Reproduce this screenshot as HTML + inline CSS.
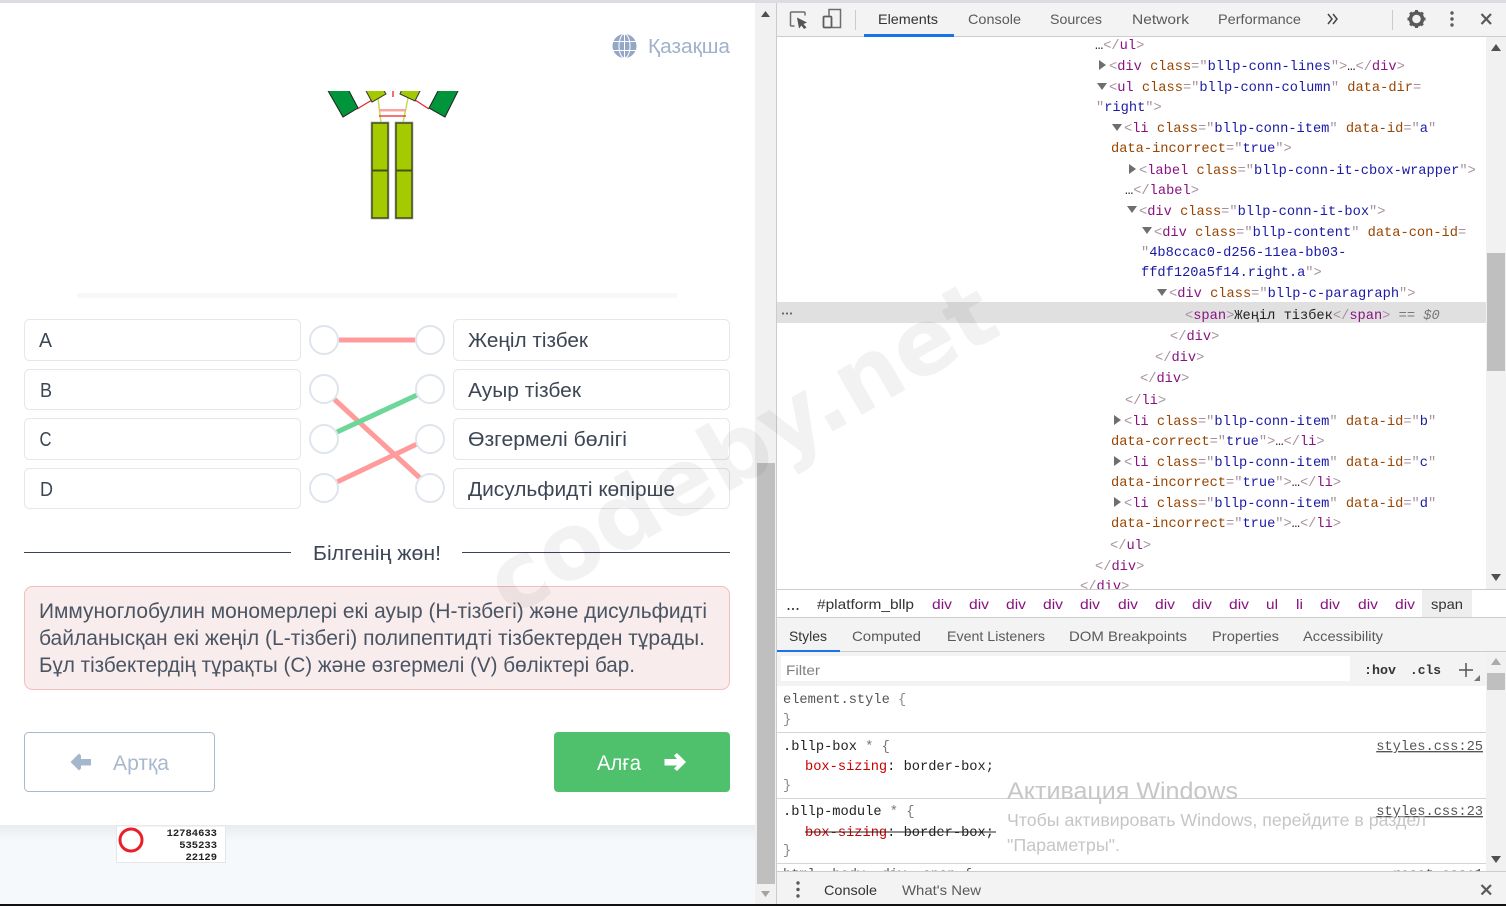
<!DOCTYPE html>
<html><head><meta charset="utf-8"><style>
html,body{margin:0;padding:0;width:1506px;height:906px;overflow:hidden;background:#fff}
svg{display:block}
text{white-space:pre}
.s{font-family:"Liberation Sans","DejaVu Sans",sans-serif}
.m{font-family:"Liberation Mono","DejaVu Sans Mono",monospace;font-size:13.7px}
.l{font-size:20px;fill:#3c4654}
.d{font-size:14px;fill:#333}
.g{font-size:14px;fill:#5a5a5a}
.c{font-size:14px;fill:#881280}
.b{fill:#a8909f}.t{fill:#881280}.a{fill:#994500}.v{fill:#1a1aa6}.k{fill:#222}.r{fill:#c80000}
</style></head><body>
<svg width="1506" height="906" viewBox="0 0 1506 906" xmlns="http://www.w3.org/2000/svg">
<defs>
<linearGradient id="sh" x1="0" y1="0" x2="0" y2="1"><stop offset="0" stop-color="#e9ecee"/><stop offset="1" stop-color="#f5f9fb"/></linearGradient>
<clipPath id="ca"><rect x="300" y="91" width="200" height="140"/></clipPath>
<clipPath id="cb"><rect x="777" y="37" width="709" height="552"/></clipPath>
<clipPath id="cc"><rect x="777" y="686" width="709" height="185"/></clipPath>
</defs>

<!-- left page -->
<rect x="0" y="0" width="756" height="904" fill="#f5f9fb"/>
<rect x="0" y="825" width="756" height="16" fill="url(#sh)"/>
<rect x="0" y="3" width="755" height="822" fill="#fff"/>
<rect x="0" y="0" width="1506" height="3" fill="#dcdce3"/>

<!-- language -->
<g fill="#94a7c6"><circle cx="624.500" cy="46" r="12"/></g>
<g stroke="#fff" stroke-width="1" fill="none"><ellipse cx="624.500" cy="46" rx="5.500" ry="12"/><path d="M624.500 34v24M613 41.500h23M613 50.500h23"/></g>
<text class="s" x="648" y="53" font-size="20" fill="#a0b1cb" textLength="82" lengthAdjust="spacingAndGlyphs">Қазақша</text>

<!-- antibody image -->
<g clip-path="url(#ca)">
<path d="M378 98L381 123M408 98L403 123" stroke="#c4dc50" stroke-width="1.500" fill="none"/>
<path d="M357 109L372 100M429 109L415 100M393 85V97M379 116H406" stroke="#e8252b" stroke-width="1.300" fill="none"/>
<rect x="379" y="109" width="27" height="2.500" fill="#f7a6a0"/>
<path d="M327 89L348 89L358 108L343 117Z" fill="#00953b" stroke="#222" stroke-width="1"/>
<path d="M459 89L439 89L429 108L445 117Z" fill="#00953b" stroke="#222" stroke-width="1"/>
<path d="M365 89L383 89L386 94L372 102Z" fill="#a5c900" stroke="#333" stroke-width="1"/>
<path d="M421 89L402 89L400 94L415 101Z" fill="#a5c900" stroke="#333" stroke-width="1"/>
<g fill="none" stroke="#c4c4c4" stroke-width="3">
<rect x="372" y="123" width="16" height="95"/><rect x="396" y="123" width="16" height="95"/></g>
<g fill="#a5ca00" stroke="#414a22" stroke-width="1.500">
<rect x="372" y="123" width="16" height="95"/><rect x="396" y="123" width="16" height="95"/></g>
<path d="M372 170.500H388M396 170.500H412" stroke="#445310" stroke-width="2"/>
</g>
<rect x="77" y="293" width="600" height="5" fill="#f7f8fa"/>

<!-- connection boxes -->
<g fill="#fff" stroke="#e3e8ee" stroke-width="1">
<rect x="24.500" y="319.500" width="276" height="41" rx="5"/>
<rect x="24.500" y="369.500" width="276" height="40" rx="5"/>
<rect x="24.500" y="418.500" width="276" height="41" rx="5"/>
<rect x="24.500" y="468.500" width="276" height="40" rx="5"/>
<rect x="453.500" y="319.500" width="276" height="41" rx="5"/>
<rect x="453.500" y="369.500" width="276" height="40" rx="5"/>
<rect x="453.500" y="418.500" width="276" height="41" rx="5"/>
<rect x="453.500" y="468.500" width="276" height="40" rx="5"/>
</g>
<g class="s l">
<text class="s l" x="39" y="347" textLength="13" lengthAdjust="spacingAndGlyphs">A</text>
<text class="s l" x="40" y="397" textLength="12" lengthAdjust="spacingAndGlyphs">B</text>
<text class="s l" x="39.500" y="446" textLength="12" lengthAdjust="spacingAndGlyphs">C</text>
<text class="s l" x="40" y="496" textLength="13" lengthAdjust="spacingAndGlyphs">D</text>
<text class="s l" x="468" y="347" textLength="120" lengthAdjust="spacingAndGlyphs">Жеңіл тізбек</text>
<text class="s l" x="468" y="397" textLength="113" lengthAdjust="spacingAndGlyphs">Ауыр тізбек</text>
<text class="s l" x="468" y="446" textLength="159" lengthAdjust="spacingAndGlyphs">Өзгермелі бөлігі</text>
<text class="s l" x="468" y="496" textLength="207" lengthAdjust="spacingAndGlyphs">Дисульфидті көпірше</text>
</g>

<!-- lines -->
<path d="M339 340H415M334 399L420 478M337 482L417 444" stroke="#ff9b9b" stroke-width="5" fill="none"/>
<path d="M337 432L417 395" stroke="#6dd699" stroke-width="5" fill="none"/>
<g fill="#fff" stroke="#dfe5ec" stroke-width="2">
<circle cx="324" cy="340" r="14"/><circle cx="324" cy="389" r="14"/><circle cx="324" cy="439" r="14"/><circle cx="324" cy="488" r="14"/>
<circle cx="430" cy="340" r="14"/><circle cx="430" cy="389" r="14"/><circle cx="430" cy="439" r="14"/><circle cx="430" cy="488" r="14"/>
</g>

<!-- feedback -->
<path d="M24 552.500H291M462 552.500H730" stroke="#3a4554" stroke-width="1"/>
<text class="s l" x="313" y="560" textLength="128" lengthAdjust="spacingAndGlyphs">Білгенің жөн!</text>
<rect x="24.500" y="586.500" width="705" height="103" rx="8" fill="#f9eced" stroke="#f7bcbc"/>
<g class="s" font-size="21" fill="#4a5563">
<text x="39" y="618" textLength="668" lengthAdjust="spacingAndGlyphs">Иммуноглобулин мономерлері екі ауыр (Н-тізбегі) және дисульфидті</text>
<text x="39" y="645" textLength="666" lengthAdjust="spacingAndGlyphs">байланысқан екі жеңіл (L-тізбегі) полипептидті тізбектерден тұрады.</text>
<text x="39" y="672" textLength="596" lengthAdjust="spacingAndGlyphs">Бұл тізбектердің тұрақты (С) және өзгермелі (V) бөліктері бар.</text>
</g>

<!-- buttons -->
<rect x="24.500" y="732.500" width="190" height="59" rx="4" fill="#fff" stroke="#a9b9cc"/>
<path d="M70.500 762L79 753.500L81 755.500V759H91V765.500H81V768.500L79 770.500Z" fill="#a5b7cc"/>
<text class="s" x="113" y="770" font-size="21" fill="#a8b9cd" textLength="56" lengthAdjust="spacingAndGlyphs">Артқа</text>
<rect x="554" y="732" width="176" height="60" rx="4" fill="#4fc16c"/>
<text class="s" x="597" y="770" font-size="21" fill="#fff" textLength="44" lengthAdjust="spacingAndGlyphs">Алға</text>
<path d="M686 762L677 753L674 755.500L677 759H664.500V765.500H677L674 768.500L677 771Z" fill="#fff"/>

<!-- small image -->
<rect x="116.500" y="826" width="109" height="36.500" fill="#fff" stroke="#e6e6e6"/>
<circle cx="131" cy="840" r="11" fill="none" stroke="#e8202a" stroke-width="3"/>
<g font-family="'Liberation Mono',monospace" font-size="10.500" font-weight="700" fill="#222" text-anchor="end">
<text x="217" y="836">12784633</text><text x="217" y="848">535233</text><text x="217" y="860">22129</text>
</g>

<!-- left scrollbar -->
<rect x="755" y="3" width="22" height="901" fill="#f1f1f1"/>
<rect x="757" y="463" width="18" height="421" fill="#bfbfbf"/>
<path d="M765.500 11L770 17H761Z" fill="#505050"/>
<path d="M761 891H770L765.500 897Z" fill="#a3a3a3"/>

<!-- devtools -->
<rect x="777" y="3" width="729" height="901" fill="#fff"/>
<rect x="776" y="3" width="1" height="901" fill="#ccc"/>
<rect x="777" y="3" width="729" height="33" fill="#f3f3f3"/>
<rect x="777" y="36" width="729" height="1" fill="#ccc"/>
<rect x="864" y="34" width="90" height="3" fill="#1a73e8"/>
<!-- toolbar icons -->
<path d="M794.500 26H791.500Q790.500 26 790.500 25V13Q790.500 12 791.500 12H804Q805 12 805 13V15.500" fill="none" stroke="#6e6e6e" stroke-width="1.500"/>
<path d="M797 17.500L807 22.500L803.500 24L806.500 27.500L804 29L801.500 25.500L799 28.500Z" fill="#555"/>
<path d="M832 9.500H840.500V27.500H832" fill="none" stroke="#6e6e6e" stroke-width="1.500"/>
<path d="M829 15.500V9.500H832" fill="none" stroke="#6e6e6e" stroke-width="1.500"/>
<rect x="823.500" y="16.500" width="8" height="11" rx="1" fill="#f3f3f3" stroke="#5e5e5e" stroke-width="1.800"/>
<path d="M855.500 10V30M1392.500 10V30" stroke="#ccc"/>
<text class="s d" x="878" y="24" textLength="60" lengthAdjust="spacingAndGlyphs">Elements</text>
<g class="s g">
<text class="s g" x="968" y="24" textLength="53" lengthAdjust="spacingAndGlyphs">Console</text>
<text class="s g" x="1050" y="24" textLength="52" lengthAdjust="spacingAndGlyphs">Sources</text>
<text class="s g" x="1132" y="24" textLength="57" lengthAdjust="spacingAndGlyphs">Network</text>
<text class="s g" x="1218" y="24" textLength="83" lengthAdjust="spacingAndGlyphs">Performance</text>
</g>
<path d="M1328 14L1332 19L1328 24M1333 14L1337 19L1333 24" fill="none" stroke="#444" stroke-width="1.500"/>
<!-- gear -->
<circle cx="1416.500" cy="19" r="6" fill="none" stroke="#5a5a5a" stroke-width="3.500"/>
<path d="M1416.500 10V28M1407.500 19H1425.500M1410.100 12.600L1422.900 25.400M1422.900 12.600L1410.100 25.400" stroke="#5a5a5a" stroke-width="3" stroke-dasharray="3 12 3"/>
<g fill="#5a5a5a"><circle cx="1452" cy="13" r="1.700"/><circle cx="1452" cy="19" r="1.700"/><circle cx="1452" cy="25" r="1.700"/></g>
<path d="M1481.500 14L1491 24M1491 14L1481.500 24" stroke="#5a5a5a" stroke-width="2.200"/>

<!-- elements tree -->
<rect x="777" y="302" width="709" height="21" fill="#e0e0e0"/>
<g fill="#666"><circle cx="783" cy="313.500" r="1.100"/><circle cx="787" cy="313.500" r="1.100"/><circle cx="791" cy="313.500" r="1.100"/></g>
<g clip-path="url(#cb)">
<g fill="#6e6e6e">
<path d="M1099 60L1106 65L1099 70Z"/>
<path d="M1097 83H1107L1102 90Z"/>
<path d="M1112 124H1122L1117 131Z"/>
<path d="M1129 164L1136 169L1129 174Z"/>
<path d="M1127 206H1137L1132 213Z"/>
<path d="M1142 227H1152L1147 234Z"/>
<path d="M1157 289H1167L1162 296Z"/>
<path d="M1114 415L1121 420L1114 425Z"/>
<path d="M1114 456L1121 461L1114 466Z"/>
<path d="M1114 497L1121 502L1114 507Z"/>
</g>
<g class="m">
<text class="m" x="1095" y="49"><tspan class="k">…</tspan><tspan class="b">&lt;/</tspan><tspan class="t">ul</tspan><tspan class="b">&gt;</tspan></text>
<text class="m" x="1109" y="70"><tspan class="b">&lt;</tspan><tspan class="t">div</tspan> <tspan class="a">class</tspan><tspan class="b">="</tspan><tspan class="v">bllp-conn-lines</tspan><tspan class="b">"&gt;</tspan><tspan class="k">…</tspan><tspan class="b">&lt;/</tspan><tspan class="t">div</tspan><tspan class="b">&gt;</tspan></text>
<text class="m" x="1109" y="91"><tspan class="b">&lt;</tspan><tspan class="t">ul</tspan> <tspan class="a">class</tspan><tspan class="b">="</tspan><tspan class="v">bllp-conn-column</tspan><tspan class="b">"</tspan> <tspan class="a">data-dir</tspan><tspan class="b">=</tspan></text>
<text class="m" x="1096" y="111"><tspan class="b">"</tspan><tspan class="v">right</tspan><tspan class="b">"&gt;</tspan></text>
<text class="m" x="1124" y="132"><tspan class="b">&lt;</tspan><tspan class="t">li</tspan> <tspan class="a">class</tspan><tspan class="b">="</tspan><tspan class="v">bllp-conn-item</tspan><tspan class="b">"</tspan> <tspan class="a">data-id</tspan><tspan class="b">="</tspan><tspan class="v">a</tspan><tspan class="b">"</tspan></text>
<text class="m" x="1111" y="152"><tspan class="a">data-incorrect</tspan><tspan class="b">="</tspan><tspan class="v">true</tspan><tspan class="b">"&gt;</tspan></text>
<text class="m" x="1139" y="174"><tspan class="b">&lt;</tspan><tspan class="t">label</tspan> <tspan class="a">class</tspan><tspan class="b">="</tspan><tspan class="v">bllp-conn-it-cbox-wrapper</tspan><tspan class="b">"&gt;</tspan></text>
<text class="m" x="1125" y="194"><tspan class="k">…</tspan><tspan class="b">&lt;/</tspan><tspan class="t">label</tspan><tspan class="b">&gt;</tspan></text>
<text class="m" x="1139" y="215"><tspan class="b">&lt;</tspan><tspan class="t">div</tspan> <tspan class="a">class</tspan><tspan class="b">="</tspan><tspan class="v">bllp-conn-it-box</tspan><tspan class="b">"&gt;</tspan></text>
<text class="m" x="1154" y="236"><tspan class="b">&lt;</tspan><tspan class="t">div</tspan> <tspan class="a">class</tspan><tspan class="b">="</tspan><tspan class="v">bllp-content</tspan><tspan class="b">"</tspan> <tspan class="a">data-con-id</tspan><tspan class="b">=</tspan></text>
<text class="m" x="1141" y="256"><tspan class="b">"</tspan><tspan class="v">4b8ccac0-d256-11ea-bb03-</tspan></text>
<text class="m" x="1141" y="276"><tspan class="v">ffdf120a5f14.right.a</tspan><tspan class="b">"&gt;</tspan></text>
<text class="m" x="1169" y="297"><tspan class="b">&lt;</tspan><tspan class="t">div</tspan> <tspan class="a">class</tspan><tspan class="b">="</tspan><tspan class="v">bllp-c-paragraph</tspan><tspan class="b">"&gt;</tspan></text>
<text class="m" x="1185" y="319"><tspan class="b">&lt;</tspan><tspan class="t">span</tspan><tspan class="b">&gt;</tspan><tspan class="k">Жеңіл тізбек</tspan><tspan class="b">&lt;/</tspan><tspan class="t">span</tspan><tspan class="b">&gt;</tspan><tspan fill="#777"> == </tspan><tspan fill="#777" font-style="italic">$0</tspan></text>
<text class="m" x="1170" y="340"><tspan class="b">&lt;/</tspan><tspan class="t">div</tspan><tspan class="b">&gt;</tspan></text>
<text class="m" x="1155" y="361"><tspan class="b">&lt;/</tspan><tspan class="t">div</tspan><tspan class="b">&gt;</tspan></text>
<text class="m" x="1140" y="382"><tspan class="b">&lt;/</tspan><tspan class="t">div</tspan><tspan class="b">&gt;</tspan></text>
<text class="m" x="1125" y="404"><tspan class="b">&lt;/</tspan><tspan class="t">li</tspan><tspan class="b">&gt;</tspan></text>
<text class="m" x="1124" y="425"><tspan class="b">&lt;</tspan><tspan class="t">li</tspan> <tspan class="a">class</tspan><tspan class="b">="</tspan><tspan class="v">bllp-conn-item</tspan><tspan class="b">"</tspan> <tspan class="a">data-id</tspan><tspan class="b">="</tspan><tspan class="v">b</tspan><tspan class="b">"</tspan></text>
<text class="m" x="1111" y="445"><tspan class="a">data-correct</tspan><tspan class="b">="</tspan><tspan class="v">true</tspan><tspan class="b">"&gt;</tspan><tspan class="k">…</tspan><tspan class="b">&lt;/</tspan><tspan class="t">li</tspan><tspan class="b">&gt;</tspan></text>
<text class="m" x="1124" y="466"><tspan class="b">&lt;</tspan><tspan class="t">li</tspan> <tspan class="a">class</tspan><tspan class="b">="</tspan><tspan class="v">bllp-conn-item</tspan><tspan class="b">"</tspan> <tspan class="a">data-id</tspan><tspan class="b">="</tspan><tspan class="v">c</tspan><tspan class="b">"</tspan></text>
<text class="m" x="1111" y="486"><tspan class="a">data-incorrect</tspan><tspan class="b">="</tspan><tspan class="v">true</tspan><tspan class="b">"&gt;</tspan><tspan class="k">…</tspan><tspan class="b">&lt;/</tspan><tspan class="t">li</tspan><tspan class="b">&gt;</tspan></text>
<text class="m" x="1124" y="507"><tspan class="b">&lt;</tspan><tspan class="t">li</tspan> <tspan class="a">class</tspan><tspan class="b">="</tspan><tspan class="v">bllp-conn-item</tspan><tspan class="b">"</tspan> <tspan class="a">data-id</tspan><tspan class="b">="</tspan><tspan class="v">d</tspan><tspan class="b">"</tspan></text>
<text class="m" x="1111" y="527"><tspan class="a">data-incorrect</tspan><tspan class="b">="</tspan><tspan class="v">true</tspan><tspan class="b">"&gt;</tspan><tspan class="k">…</tspan><tspan class="b">&lt;/</tspan><tspan class="t">li</tspan><tspan class="b">&gt;</tspan></text>
<text class="m" x="1110" y="549"><tspan class="b">&lt;/</tspan><tspan class="t">ul</tspan><tspan class="b">&gt;</tspan></text>
<text class="m" x="1095" y="570"><tspan class="b">&lt;/</tspan><tspan class="t">div</tspan><tspan class="b">&gt;</tspan></text>
<text class="m" x="1080" y="590"><tspan class="b">&lt;/</tspan><tspan class="t">div</tspan><tspan class="b">&gt;</tspan></text>
</g>
</g>
<!-- elements scrollbar -->
<rect x="1486" y="37" width="20" height="552" fill="#f1f1f1"/>
<rect x="1487" y="253" width="18" height="118" fill="#bfbfbf"/>
<path d="M1496 44L1501 51H1491Z" fill="#505050"/>
<path d="M1491 574H1501L1496 581Z" fill="#505050"/>

<!-- breadcrumbs -->
<rect x="777" y="589" width="729" height="1" fill="#ccc"/>
<rect x="1422" y="590" width="50" height="27" fill="#eee"/>
<g fill="#222"><circle cx="788.500" cy="609" r="1"/><circle cx="793" cy="609" r="1"/><circle cx="797.500" cy="609" r="1"/></g>
<text class="s d" x="817" y="609" textLength="97" lengthAdjust="spacingAndGlyphs">#platform_bllp</text>
<g>
<text class="s c" x="932" y="609" textLength="20" lengthAdjust="spacingAndGlyphs">div</text>
<text class="s c" x="969" y="609" textLength="20" lengthAdjust="spacingAndGlyphs">div</text>
<text class="s c" x="1006" y="609" textLength="20" lengthAdjust="spacingAndGlyphs">div</text>
<text class="s c" x="1043" y="609" textLength="20" lengthAdjust="spacingAndGlyphs">div</text>
<text class="s c" x="1080" y="609" textLength="20" lengthAdjust="spacingAndGlyphs">div</text>
<text class="s c" x="1118" y="609" textLength="20" lengthAdjust="spacingAndGlyphs">div</text>
<text class="s c" x="1155" y="609" textLength="20" lengthAdjust="spacingAndGlyphs">div</text>
<text class="s c" x="1192" y="609" textLength="20" lengthAdjust="spacingAndGlyphs">div</text>
<text class="s c" x="1229" y="609" textLength="20" lengthAdjust="spacingAndGlyphs">div</text>
<text class="s c" x="1266" y="609" textLength="12" lengthAdjust="spacingAndGlyphs">ul</text>
<text class="s c" x="1296" y="609" textLength="7" lengthAdjust="spacingAndGlyphs">li</text>
<text class="s c" x="1320" y="609" textLength="20" lengthAdjust="spacingAndGlyphs">div</text>
<text class="s c" x="1358" y="609" textLength="20" lengthAdjust="spacingAndGlyphs">div</text>
<text class="s c" x="1395" y="609" textLength="20" lengthAdjust="spacingAndGlyphs">div</text>
</g>
<text class="s d" x="1431" y="609" textLength="32" lengthAdjust="spacingAndGlyphs">span</text>

<!-- styles tabs -->
<rect x="777" y="617" width="729" height="1" fill="#ccc"/>
<rect x="777" y="618" width="729" height="68" fill="#f3f3f3"/>
<rect x="777" y="651" width="729" height="1" fill="#ccc"/>
<rect x="777" y="650" width="63" height="2" fill="#1a73e8"/>
<text class="s d" x="789" y="641" textLength="38" lengthAdjust="spacingAndGlyphs">Styles</text>
<text class="s g" x="852" y="641" textLength="69" lengthAdjust="spacingAndGlyphs">Computed</text>
<text class="s g" x="947" y="641" textLength="98" lengthAdjust="spacingAndGlyphs">Event Listeners</text>
<text class="s g" x="1069" y="641" textLength="118" lengthAdjust="spacingAndGlyphs">DOM Breakpoints</text>
<text class="s g" x="1212" y="641" textLength="67" lengthAdjust="spacingAndGlyphs">Properties</text>
<text class="s g" x="1303" y="641" textLength="80" lengthAdjust="spacingAndGlyphs">Accessibility</text>
<rect x="781" y="656" width="569" height="25" fill="#fff"/>
<text class="s" x="786" y="675" font-size="14" fill="#808080" textLength="34" lengthAdjust="spacingAndGlyphs">Filter</text>
<text x="1364" y="674" font-family="'Liberation Mono',monospace" font-size="13" font-weight="700" fill="#333" textLength="32" lengthAdjust="spacingAndGlyphs">:hov</text>
<text x="1410" y="674" font-family="'Liberation Mono',monospace" font-size="13" font-weight="700" fill="#333" textLength="31" lengthAdjust="spacingAndGlyphs">.cls</text>
<path d="M1466 663V677M1459 670H1473" stroke="#555" stroke-width="1.500"/>
<path d="M1480 675V681H1474Z" fill="#777"/>

<!-- styles pane -->
<g clip-path="url(#cc)">
<g class="m">
<text class="m" x="783" y="703" fill="#555">element.style <tspan fill="#888">{</tspan></text>
<text class="m" x="783" y="723" fill="#888">}</text>
<text class="m" x="783" y="750" fill="#222">.bllp-box <tspan fill="#777">* {</tspan></text>
<text class="m" x="805" y="770" fill="#222"><tspan class="r">box-sizing</tspan>: border-box;</text>
<text class="m" x="783" y="789" fill="#888">}</text>
<text class="m" x="783" y="815" fill="#222">.bllp-module <tspan fill="#777">* {</tspan></text>
<text class="m" x="805" y="836" fill="#222"><tspan class="r">box-sizing</tspan>: border-box;</text>
<text class="m" x="783" y="854" fill="#888">}</text>
<text class="m" x="783" y="878" fill="#555">html, body, div, span {</text>
<text class="m" x="1483" y="750" fill="#555" text-anchor="end" text-decoration="underline">styles.css:25</text>
<text class="m" x="1483" y="815" fill="#555" text-anchor="end" text-decoration="underline">styles.css:23</text>
<text class="m" x="1483" y="878" fill="#555" text-anchor="end">reset.css:1</text>
</g>
<path d="M805 832H996" stroke="#222" stroke-width="1"/>
<path d="M777 732.500H1486M777 798.500H1486M777 863.500H1486" stroke="#d4d4d4"/>
</g>
<rect x="1486" y="653" width="20" height="218" fill="#f1f1f1"/>
<rect x="1487" y="673" width="18" height="17" fill="#bfbfbf"/>
<path d="M1496 658L1501 665H1491Z" fill="#aaa"/>
<path d="M1491 856H1501L1496 863Z" fill="#505050"/>

<!-- drawer -->
<rect x="777" y="871" width="729" height="33" fill="#f3f3f3"/>
<rect x="777" y="871" width="729" height="1" fill="#ccc"/>
<g fill="#5a5a5a"><circle cx="798" cy="883" r="1.700"/><circle cx="798" cy="889.500" r="1.700"/><circle cx="798" cy="896" r="1.700"/></g>
<text class="s d" x="824" y="895" textLength="53" lengthAdjust="spacingAndGlyphs">Console</text>
<text class="s g" x="902" y="895" textLength="79" lengthAdjust="spacingAndGlyphs">What's New</text>
<path d="M1481.500 885L1491 894.500M1491 885L1481.500 894.500" stroke="#5a5a5a" stroke-width="2.200"/>

<!-- Windows watermark -->
<g class="s" fill="#c6c6c6">
<text x="1007" y="799" font-size="24" textLength="231" lengthAdjust="spacingAndGlyphs">Активация Windows</text>
<text x="1007" y="826" font-size="17.500" textLength="419" lengthAdjust="spacingAndGlyphs">Чтобы активировать Windows, перейдите в раздел</text>
<text x="1007" y="851" font-size="17.500" textLength="113" lengthAdjust="spacingAndGlyphs">"Параметры".</text>
</g>

<!-- codeby watermark -->
<text transform="translate(510 618) rotate(-30)" font-family="'DejaVu Sans',sans-serif" font-size="92" font-weight="700" fill="#000" fill-opacity="0.05">codeby.net</text>

<!-- bottom edge -->
<rect x="0" y="904" width="1506" height="2" fill="#111"/>
</svg>
</body></html>
